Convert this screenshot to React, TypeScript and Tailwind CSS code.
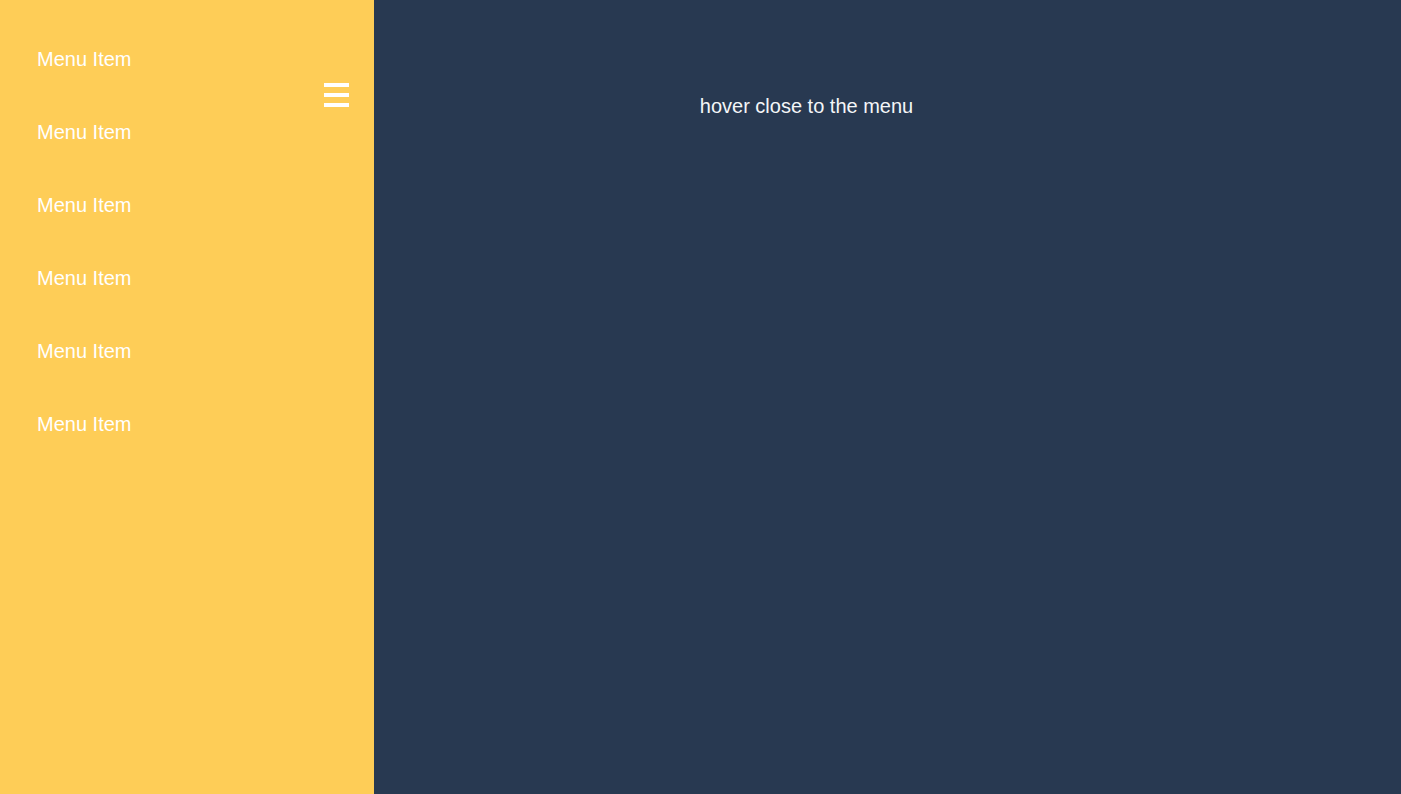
export default function App() {
  const items = Array.from({ length: 6 }, () => "Menu Item");

  return (
    <div
      className="flex h-[794px] w-full overflow-hidden"
      style={{ fontFamily: '"Liberation Sans", Arial, sans-serif' }}
    >
      <aside className="relative w-[374px] shrink-0 bg-[#fecd57] pt-[22px]">
        <ul>
          {items.map((label, i) => (
            <li
              key={i}
              className="flex h-[73px] items-center pl-[37px] text-[20px] text-white"
            >
              {label}
            </li>
          ))}
        </ul>
        <button className="absolute left-[324px] top-[83px] flex w-[25px] flex-col gap-[6px]">
          <span className="block h-[4px] w-full bg-white" />
          <span className="block h-[4px] w-full bg-white" />
          <span className="block h-[4px] w-full bg-white" />
        </button>
      </aside>

      <main className="flex flex-1 justify-center bg-[#283951] pr-[162px] pt-[94px]">
        <p className="text-[20px] leading-[24px] text-[#f4f6f8]">
          hover close to the menu
        </p>
      </main>
    </div>
  );
}
